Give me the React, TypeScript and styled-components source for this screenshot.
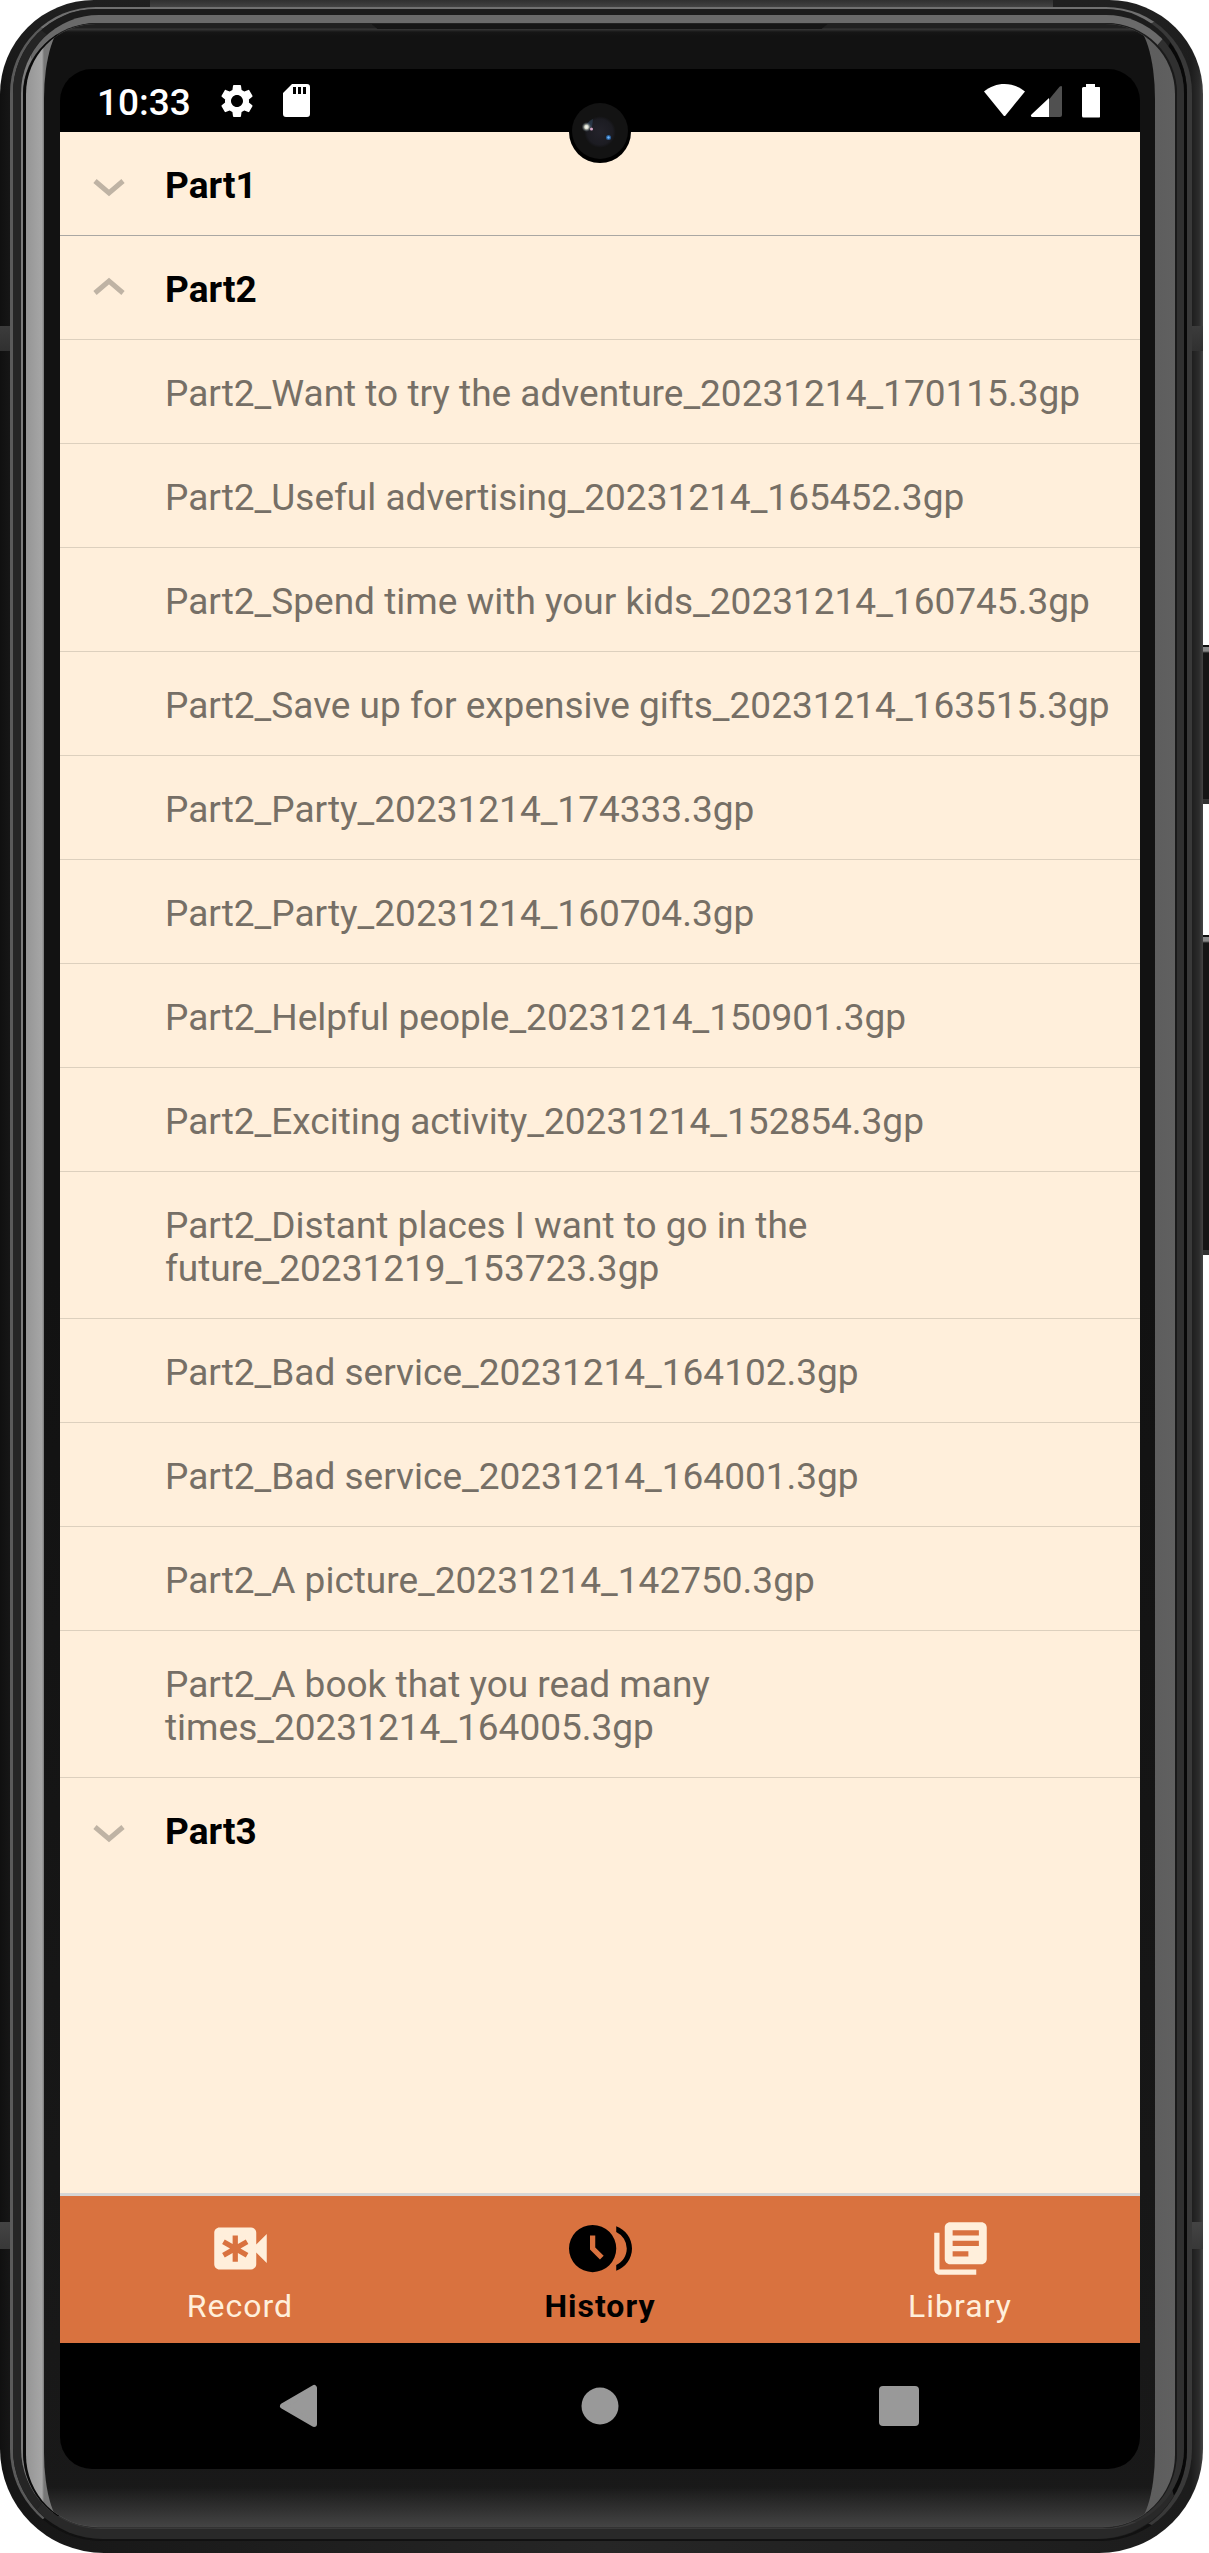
import React, { useState } from "react";
import styled, { createGlobalStyle } from "styled-components";
import { MdBrowseGallery, MdEmergencyRecording, MdLibraryBooks, MdSettings } from "react-icons/md";
import type { IconType } from "react-icons";

const color = {
  cream: "#ffefdb",
  orange: "#d9723f",
  muted: "#766f66",
  chevron: "#bfb3a4",
  rule: "#ddd0be",
  ruleStrong: "#aaa7a3",
  navKey: "#999999",
};

const GlobalStyle = createGlobalStyle`
  *, *::before, *::after { box-sizing: border-box; }
  body { margin: 0; background: #ffffff; font-family: Roboto, "Liberation Sans", sans-serif; }
  button { border: 0; margin: 0; padding: 0; background: none; font: inherit; color: inherit; cursor: pointer; }
  ul { list-style: none; margin: 0; padding: 0; }
`;

/* ---------- device ---------- */

const Device = styled.div`
  display: flex;
  min-height: 100vh;
`;

const Layer = styled.div`
  flex: 1;
  min-width: 0;
  display: flex;
`;

const Shell = styled(Layer)`
  position: relative;
  padding: 7px 11px 12px 10px;
  border-radius: 94px 94px 104px 104px;
  background:
    linear-gradient(#3c3c3c, #303030) 0 326px / 11px 25px no-repeat,
    linear-gradient(#3c3c3c, #303030) 100% 326px / 15px 25px no-repeat,
    linear-gradient(#444, #383838) 0 calc(100% - 304px) / 11px 27px no-repeat,
    linear-gradient(#444, #383838) 100% calc(100% - 304px) / 15px 27px no-repeat,
    linear-gradient(#303030, #484848) 50% 0 / calc(100% - 300px) 9px no-repeat,
    linear-gradient(#202020 0, transparent 90px) 0 0 / 100% 100px no-repeat,
    linear-gradient(90deg, #101010 0, #161616 10px, #262626 50%, #1c1c1c calc(100% - 12px), #2c2c2c calc(100% - 4px), #444 100%);
`;

const OuterRim = styled(Layer)`
  border-style: solid;
  border-width: 2px 5px 2px 3px;
  border-color: #707070 #393939 #111111 #5a5a5a;
  border-radius: 86px 86px 92px 92px;
`;

const Groove = styled(Layer)`
  border-style: solid;
  border-width: 6px 3px 10px 8px;
  border-color: #1c1c1c #080808 #292929 #252525;
  border-radius: 84px 84px 90px 90px;
  background: #1c1c1c;
`;

const InnerRim = styled(Layer)`
  border-style: solid;
  border-width: 8px 7px 1px 2px;
  border-color: #6a6a6a #303030 #3a3a3a #7c7c7c;
  border-radius: 78px 78px 80px 80px;
  background: #1c1c1c;
`;

const Seal = styled(Layer)`
  border-style: solid;
  border-width: 1px 2px 1px 3px;
  border-color: #222222 #1a1a1a #333333 #0a0a0a;
  border-radius: 73px 73px 75px 75px;
  background: #0a0a0a;
`;

const Glass = styled(Layer)`
  overflow: hidden;
  padding: 0 20px 0 18px;
  border-radius: 70px 70px 72px 72px;
  background: linear-gradient(90deg, #959595 0, #a6a6a6 16px, #777 18px, #777 50%, #5e5e5e calc(100% - 18px), #606060 100%);
`;

const Bezel = styled(Layer)`
  position: relative;
  padding: 45px 15px 58px 16px;
  border-radius: 24px / 75px;
  background:
    linear-gradient(#202020 0, #202020 4px, #383838 5px, #161616 8px, transparent 12px) 0 0 / 100% 20px no-repeat,
    linear-gradient(transparent, #444444) 0 100% / 100% 40px no-repeat,
    linear-gradient(#121212, #121212 50%, #191919);
`;

const Earpiece = styled.span`
  position: absolute;
  top: 0;
  left: 50%;
  width: 456px;
  height: 5px;
  transform: translateX(-50%);
  background: #151515;
  clip-path: polygon(0 0, 100% 0, calc(100% - 6px) 100%, 6px 100%);
`;

const Screen = styled.div`
  position: relative;
  flex: 1;
  min-width: 0;
  display: flex;
  flex-direction: column;
  overflow: hidden;
  border-radius: 32px;
  background: #000000;
`;

const Camera = styled.svg`
  position: absolute;
  top: 32px;
  left: 50%;
  width: 62px;
  height: 62px;
  transform: translateX(-50%);
`;

const SideKeys = styled.div`
  flex: 0 0 6px;
  display: flex;
  flex-direction: column;
  gap: 131px;
  padding-top: 645px;
`;

const SideKey = styled.span<{ $height: number }>`
  height: ${(p) => p.$height}px;
  border-top: 2px solid #111111;
  border-bottom: 5px solid #333333;
  background: linear-gradient(#8a8a8a 0, #8a8a8a 4px, #151515 6px);
`;

/* ---------- status bar ---------- */

const StatusBar = styled.header`
  flex: 0 0 63px;
  display: flex;
  align-items: center;
  justify-content: space-between;
  padding: 0 40px 0 37px;
  color: #ffffff;
`;

const StatusGroup = styled.div`
  display: flex;
  align-items: center;
  gap: 26px;
`;

const Clock = styled.time`
  padding-top: 3px;
  font-size: 37px;
  font-weight: 500;
  line-height: 43px;
`;

/* ---------- list ---------- */

const History = styled.main`
  flex: 1;
  background: ${color.cream};
  color: #000000;
`;

const Divider = styled.hr<{ $strong?: boolean }>`
  height: 1px;
  margin: 0;
  border: 0;
  background: ${(p) => (p.$strong ? color.ruleStrong : color.rule)};
`;

const GroupButton = styled.button`
  width: 100%;
  display: flex;
  align-items: center;
  gap: 40px;
  padding: 32px 20px 28px 33px;
  font-size: 37px;
  font-weight: 700;
  line-height: 43px;
  text-align: left;
`;

const Chevron = styled.svg<{ $open: boolean }>`
  width: 32px;
  height: 24px;
  margin-bottom: 2px;
  fill: none;
  stroke: ${color.chevron};
  stroke-width: 5;
  transform: ${(p) => (p.$open ? "rotate(180deg)" : "none")};
`;

const FileRow = styled.li`
  border-top: 1px solid ${color.rule};
`;

const FileButton = styled.button`
  display: block;
  width: 100%;
  padding: 32px 15px 28px 105px;
  font-size: 37px;
  line-height: 43px;
  text-align: left;
  color: ${color.muted};
`;

/* ---------- bottom tabs and system keys ---------- */

const Tabs = styled.nav`
  display: flex;
  border-top: 3px solid #d6d6d6;
  background: ${color.orange};
`;

const TabButton = styled.button<{ $active: boolean }>`
  flex: 1;
  display: flex;
  flex-direction: column;
  align-items: center;
  gap: 7px;
  padding: 21px 0 18px;
  color: ${(p) => (p.$active ? "#000000" : color.cream)};
  font-size: 32px;
  font-weight: ${(p) => (p.$active ? 700 : 400)};
  line-height: 38px;
  letter-spacing: 1px;
`;

const SystemBar = styled.footer`
  flex: 0 0 126px;
  display: flex;
  padding: 0 90px;
`;

const SystemKey = styled.button`
  flex: 1;
  display: flex;
  align-items: center;
  justify-content: center;
  svg {
    width: 42px;
    height: 44px;
    fill: ${color.navKey};
    stroke: ${color.navKey};
    stroke-linejoin: round;
  }
`;

type Group = { name: string; files: string[] };

const groups: Group[] = [
  { name: "Part1", files: [] },
  {
    name: "Part2",
    files: [
      "Part2_Want to try the adventure_20231214_170115.3gp",
      "Part2_Useful advertising_20231214_165452.3gp",
      "Part2_Spend time with your kids_20231214_160745.3gp",
      "Part2_Save up for expensive gifts_20231214_163515.3gp",
      "Part2_Party_20231214_174333.3gp",
      "Part2_Party_20231214_160704.3gp",
      "Part2_Helpful people_20231214_150901.3gp",
      "Part2_Exciting activity_20231214_152854.3gp",
      "Part2_Distant places I want to go in the future_20231219_153723.3gp",
      "Part2_Bad service_20231214_164102.3gp",
      "Part2_Bad service_20231214_164001.3gp",
      "Part2_A picture_20231214_142750.3gp",
      "Part2_A book that you read many times_20231214_164005.3gp",
    ],
  },
  { name: "Part3", files: [] },
];

const tabs: { label: string; Icon: IconType }[] = [
  { label: "Record", Icon: MdEmergencyRecording },
  { label: "History", Icon: MdBrowseGallery },
  { label: "Library", Icon: MdLibraryBooks },
];

function StatusIcons() {
  return (
    <svg width="116" height="34" viewBox="0 0 116 34" fill="currentColor" aria-hidden="true">
      <path d="M0 7.500C6 2.500 13 0 20.500 0S35 2.500 41 7.500L21.500 31.500q-1 1-2 0Z" />
      <path d="M78 3.500V31q0 2-2 2H65V15.500L75.500 2.800Q78 1 78 3.500Z" fill="#505050" />
      <path d="M65 14V33H48q-2-1-.5-2.500Z" />
      <path d="M102 0h9v3h4q2 0 2 1.500V32q0 1.500-2 1.500H99.500q-1.500 0-1.500-1.500V4.500Q98 3 99.500 3h2.500Z" />
    </svg>
  );
}

function SdCardIcon() {
  return (
    <svg width="27" height="33" viewBox="0 0 27 33" fill="currentColor" fillRule="evenodd" aria-hidden="true">
      <path d="M9 0H24q3 0 3 3V30q0 3-3 3H3q-3 0-3-3V9ZM10 3v7h3V3Zm5 0v7h3V3Zm5 0v7h3V3Z" />
    </svg>
  );
}

function CameraHole() {
  return (
    <Camera viewBox="0 0 62 62" aria-hidden="true">
      <defs>
        <radialGradient id="lens">
          <stop offset="0" stopColor="#23222a" />
          <stop offset="0.8" stopColor="#1c1c22" />
          <stop offset="1" stopColor="#121212" />
        </radialGradient>
        <radialGradient id="glint">
          <stop offset="0" stopColor="#ffffff" />
          <stop offset="0.35" stopColor="#d9dccb" />
          <stop offset="1" stopColor="#4a5a6a" stopOpacity="0" />
        </radialGradient>
      </defs>
      <circle cx="31" cy="31" r="31" fill="#000000" />
      <circle cx="31" cy="30" r="28" fill="#131313" />
      <circle cx="31" cy="31" r="16" fill="url(#lens)" />
      <path d="M16 28Q17 21 24 18L23 26Z" fill="#35506a" opacity="0.5" />
      <circle cx="17.500" cy="26" r="5" fill="url(#glint)" />
      <circle cx="22.500" cy="28" r="1.500" fill="#d8a8c8" />
      <circle cx="39.500" cy="36.500" r="2.500" fill="#2a5f9a" />
      <circle cx="39.500" cy="36.500" r="1.200" fill="#6db8ff" />
    </Camera>
  );
}

export default function App() {
  const [open, setOpen] = useState("Part2");
  const [tab, setTab] = useState("History");

  return (
    <>
      <GlobalStyle />
      <Device>
        <Shell>
          <OuterRim>
            <Groove>
              <InnerRim>
                <Seal>
                  <Glass>
                    <Bezel>
                      <Earpiece />
                      <Screen>
                        <StatusBar>
                          <StatusGroup>
                            <Clock>10:33</Clock>
                            <MdSettings size={40} aria-hidden="true" />
                            <SdCardIcon />
                          </StatusGroup>
                          <StatusIcons />
                        </StatusBar>
                        <History>
                          {groups.map((group, i) => {
                            const isOpen = open === group.name;
                            return (
                              <section key={group.name}>
                                {i > 0 && <Divider $strong={open !== groups[i - 1].name} />}
                                <GroupButton
                                  aria-expanded={isOpen}
                                  onClick={() => setOpen(isOpen ? "" : group.name)}
                                >
                                  <Chevron $open={isOpen} viewBox="0 0 32 24" aria-hidden="true">
                                    <path d="M2 8L16 20L30 8" />
                                  </Chevron>
                                  {group.name}
                                </GroupButton>
                                {isOpen && (
                                  <ul>
                                    {group.files.map((file) => (
                                      <FileRow key={file}>
                                        <FileButton>{file}</FileButton>
                                      </FileRow>
                                    ))}
                                  </ul>
                                )}
                              </section>
                            );
                          })}
                        </History>
                        <Tabs>
                          {tabs.map(({ label, Icon }) => (
                            <TabButton key={label} $active={tab === label} onClick={() => setTab(label)}>
                              <Icon size={63} aria-hidden="true" />
                              {label}
                            </TabButton>
                          ))}
                        </Tabs>
                        <SystemBar>
                          <SystemKey aria-label="Back">
                            <svg viewBox="0 0 42 44" strokeWidth="6">
                              <path d="M4 22L35 4V40Z" />
                            </svg>
                          </SystemKey>
                          <SystemKey aria-label="Home">
                            <svg viewBox="0 0 42 44" strokeWidth="0">
                              <circle cx="21" cy="22" r="18.500" />
                            </svg>
                          </SystemKey>
                          <SystemKey aria-label="Recent apps">
                            <svg viewBox="0 0 42 44" strokeWidth="0">
                              <rect x="0" y="2" width="40" height="40" rx="4" />
                            </svg>
                          </SystemKey>
                        </SystemBar>
                        <CameraHole />
                      </Screen>
                    </Bezel>
                  </Glass>
                </Seal>
              </InnerRim>
            </Groove>
          </OuterRim>
        </Shell>
        <SideKeys>
          <SideKey $height={159} />
          <SideKey $height={320} />
        </SideKeys>
      </Device>
    </>
  );
}
